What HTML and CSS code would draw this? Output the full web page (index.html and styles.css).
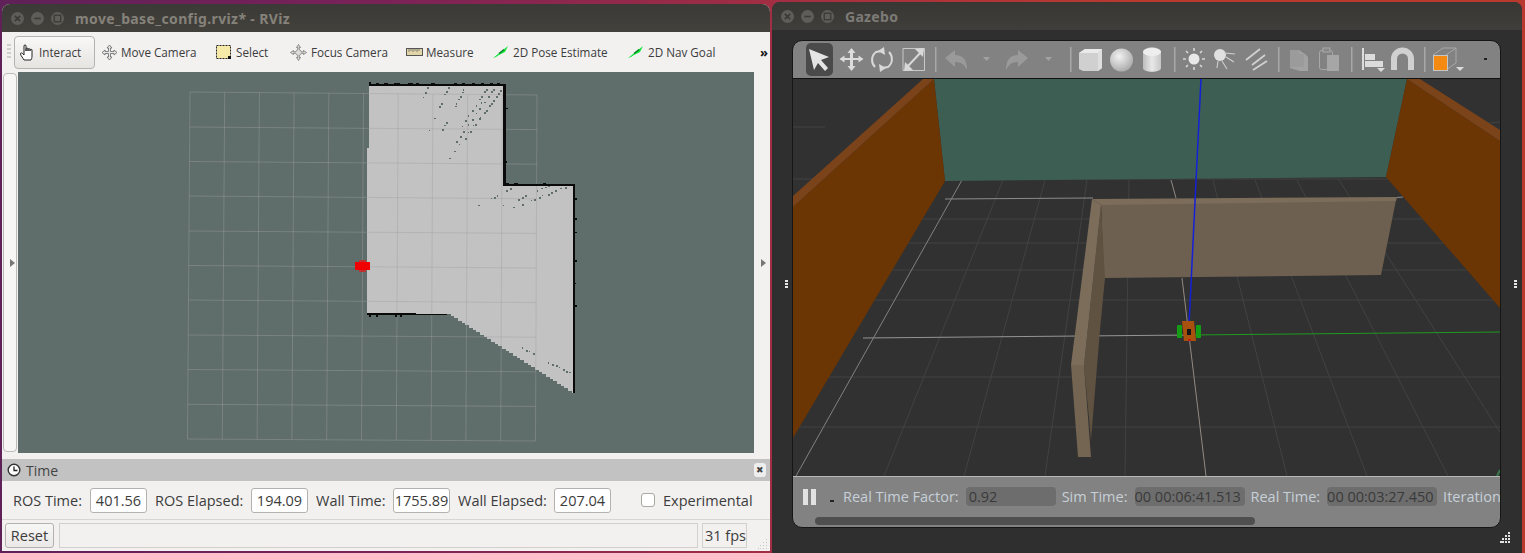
FILE: index.html
```html
<!DOCTYPE html>
<html lang="en">
<head>
<meta charset="utf-8">
<title>RViz and Gazebo</title>
<link rel="stylesheet" href="styles.css">
</head>
<body>
<svg class="defs" width="0" height="0" aria-hidden="true">
  <defs>
    <radialGradient id="sphere" cx="40%" cy="35%" r="70%"><stop offset="0" stop-color="#f2f2f2"/><stop offset="1" stop-color="#a8a8a8"/></radialGradient>
    <linearGradient id="cyl" x1="0" x2="1" y1="0" y2="0"><stop offset="0" stop-color="#bdbdbd"/><stop offset=".5" stop-color="#e8e8e8"/><stop offset="1" stop-color="#c6c6c6"/></linearGradient>
  </defs>
</svg>

<section class="window rviz">
  <header class="titlebar">
    <span class="ctl"><svg viewBox="0 0 12 12"><path d="M3.5 3.5l5 5M8.500 3.500l-5 5" stroke="#3c3a36" stroke-width="1.600"/></svg></span>
    <span class="ctl"><svg viewBox="0 0 12 12"><path d="M3 6h6" stroke="#3c3a36" stroke-width="1.600"/></svg></span>
    <span class="ctl"><svg viewBox="0 0 12 12"><rect x="3" y="3" width="6" height="6" fill="none" stroke="#3c3a36" stroke-width="1.200"/></svg></span>
    <h1 class="title title-rviz">move_base_config.rviz* - RViz</h1>
  </header>
  <nav class="rviz-tools">
    <span class="grip"></span>
    <button class="tool active t-interact">
      <svg class="ico" width="18" height="18" viewBox="0 0 18 18"><path d="M5 17c-1-2-3-4-3.500-6-.2-1 1-1.500 1.700-.8L5 12V3c0-1.500 2-1.500 2 0v5-2c0-1.300 2-1.300 2 0v2-1.500c0-1.200 2-1.200 2 0V8V7c0-1 2-1 2 0v6c0 2-.5 3-1 4z" fill="#fff" stroke="#222" stroke-width="1"/></svg>
      <span>Interact</span></button>
    <div class="tool t-move">
      <svg class="ico" width="17" height="17" viewBox="0 0 17 17"><path d="M8.500 1l2.500 3H9.500v3.500H13V6l3 2.500-3 2.500V9.500H9.500V13H11l-2.500 3L6 13h1.500V9.500H4V11L1 8.500 4 6v1.500h3.500V4H6z" fill="#e6e6e6" stroke="#666" stroke-width=".8"/></svg>
      <span>Move Camera</span></div>
    <div class="tool t-select">
      <svg class="ico" width="16" height="15" viewBox="0 0 16 15"><rect x=".5" y=".5" width="14" height="13" fill="#f7eaa8" stroke="#222" stroke-dasharray="2 1"/><rect x="12" y="11" width="3" height="3" fill="#111"/></svg>
      <span>Select</span></div>
    <div class="tool t-focus">
      <svg class="ico" width="17" height="17" viewBox="0 0 17 17"><path d="M8.500 .5l2 3h-1.200v2.300a3 3 0 0 1 2 2h2.200V6.500l3 2-3 2V9.300h-2.200a3 3 0 0 1-2 2v2.200h1.200l-2 3-2-3h1.200v-2.200a3 3 0 0 1-2-2H3.500v1.200l-3-2 3-2v1.300h2.200a3 3 0 0 1 2-2V3.500H6.500z" fill="#ddd" stroke="#666" stroke-width=".7"/></svg>
      <span>Focus Camera</span></div>
    <div class="tool t-measure">
      <svg class="ico" width="17" height="8" viewBox="0 0 17 8"><rect x=".5" y=".5" width="16" height="7" fill="#e2d6a8" stroke="#555"/><path d="M3 1v3M5 1v2M7 1v3M9 1v2M11 1v3M13 1v2" stroke="#666" stroke-width=".8"/></svg>
      <span>Measure</span></div>
    <div class="tool t-pose">
      <svg class="ico" width="16" height="14" viewBox="0 0 16 14"><path d="M0 13L15 1l-3 6-6 3-3 2z" fill="#14e53a"/><path d="M6 8.500l5-4" stroke="#0a7a24" stroke-width="1.400"/></svg>
      <span>2D Pose Estimate</span></div>
    <div class="tool t-nav">
      <svg class="ico" width="16" height="14" viewBox="0 0 16 14"><path d="M0 13L15 1l-3 6-6 3-3 2z" fill="#14e53a"/><path d="M6 8.500l5-4" stroke="#0a7a24" stroke-width="1.400"/></svg>
      <span>2D Nav Goal</span></div>
    <div class="more">»</div>
  </nav>
  <div class="rviz-main">
    <div class="side side-left"><span class="splitter"></span><span class="arrow arrow-l"></span></div>
    <svg class="map" viewBox="18 72 736 381" width="736" height="381">
      <rect x="18" y="72" width="736" height="381" fill="#5f6d6b"/>
      <path shape-rendering="crispEdges" fill="#c2c2c2" d="M369 84H505V184H575V393H572V391H568V388H564V386H561V384H557V381H553V379H550V377H546V374H542V372H539V370H535V367H531V365H528V363H524V360H520V358H517V356H513V353H509V351H506V349H502V346H498V344H495V342H491V339H487V337H484V335H480V332H476V330H473V328H469V325H465V323H462V321H458V318H454V316H451V314H367V148H369z"/>
      <g stroke="#a0a0a4" stroke-opacity=".42" stroke-width="1" fill="none">
        <path d="M190 92L187.500 439M224.700 92.300L222.300 439.200M259.400 92.600L257.100 439.400M294.100 92.900L291.900 439.600M328.800 93.200L326.700 439.800M363.500 93.500L361.500 440M398.200 93.800L396.300 440.200M432.900 94.100L431.100 440.400M467.600 94.400L465.900 440.600M502.300 94.700L500.700 440.800M537 95L535.500 441"/>
        <path d="M190 92L537 95M189.700 127L537 129.600M189.400 161.500L536.800 164.200M189.200 196L536.600 198.800M188.900 231L536.400 233.400M188.700 265.500L536.200 268M188.400 300L536 302.600M188.100 335L535.900 337.200M187.900 369.500L535.700 371.800M187.700 404.300L535.600 406.400M187.500 439L535.500 441"/>
      </g>
      <path shape-rendering="crispEdges" fill="#5f6d6b" d="M427 87h2v2h-2zM425 92h2v2h-2zM423 97h1v1h-1zM448 87h2v2h-2zM446 91h2v2h-2zM444 94h2v1h-2zM441 103h2v2h-2zM439 106h2v2h-2zM434 118h2v1h-2zM446 122h2v2h-2zM444 125h2v1h-2zM442 129h2v2h-2zM429 130h1v1h-1zM463 89h1v2h-1zM462 92h2v1h-2zM460 96h2v2h-2zM458 99h2v1h-2zM456 103h1v2h-1zM455 106h2v1h-2zM468 115h1v2h-1zM465 120h2v2h-2zM462 126h1v1h-1zM463 131h2v2h-2zM460 136h2v2h-2zM456 141h2v2h-2zM459 144h1v1h-1zM454 151h2v1h-2zM449 158h2v1h-2zM465 138h2v2h-2zM468 132h1v1h-1zM470 131h2v2h-2zM473 125h1v1h-1zM475 124h2v2h-2zM468 124h1v2h-1zM472 119h2v2h-2zM472 110h2v2h-2zM476 105h1v2h-1zM476 113h1v1h-1zM479 118h2v2h-2zM480 117h1v1h-1zM479 108h2v2h-2zM481 102h1v2h-1zM479 99h2v1h-2zM481 96h2v2h-2zM484 91h2v2h-2zM486 89h2v2h-2zM491 91h2v2h-2zM493 89h2v2h-2zM488 96h2v2h-2zM484 102h2v1h-2zM489 105h2v2h-2zM491 103h2v2h-2zM493 100h2v2h-2zM496 96h2v2h-2zM498 93h2v2h-2zM500 90h2v2h-2zM484 112h2v2h-2zM486 110h2v2h-2zM506 190h2v2h-2zM510 188h2v2h-2zM537 190h1v2h-1zM541 188h2v1h-2zM545 187h2v1h-2zM548 185h2v2h-2zM518 199h2v2h-2zM522 197h2v2h-2zM525 195h2v2h-2zM494 197h2v2h-2zM497 195h1v2h-1zM491 198h1v1h-1zM522 204h2v2h-2zM513 207h2v1h-2zM503 205h1v1h-1zM478 205h2v1h-2zM531 200h1v1h-1zM534 199h2v2h-2zM539 197h2v2h-2zM542 195h1v1h-1zM548 194h2v2h-2zM551 192h2v2h-2zM555 190h2v2h-2zM560 188h2v1h-2zM565 187h2v2h-2zM522 347h1v2h-1zM526 350h2v2h-2zM529 351h1v1h-1zM533 353h2v2h-2zM548 362h1v2h-1zM552 364h2v2h-2zM556 365h2v2h-2zM559 367h1v1h-1zM563 369h2v2h-2zM566 371h2v2h-2zM569 372h2v1h-2z"/>
      <path shape-rendering="crispEdges" fill="#0a0a0a" d="M369 82h2v3h-2zM369 84h136v2H369zM376 83h3v1h-3zM384 83h4v1h-4zM394 83h6v1h-6zM408 83h5v1h-5zM416 83h3v1h-3zM431 83h4v1h-4zM454 83h3v1h-3zM462 83h3v1h-3zM472 83h3v1h-3zM481 83h3v1h-3zM490 83h3v1h-3zM497 83h3v1h-3zM503 84h3v102h-3zM506 108h2v1h-2zM505 161h2v2h-2zM504 184h71v2h-71zM506 183h3v1h-3zM514 183h4v1h-4zM540 184h3v-1h3v1zM573 184h2v209h-2zM575 198h2v2h-2zM575 218h2v2h-2zM575 232h2v1h-2zM575 260h2v2h-2zM573 273h2v1h-2zM575 283h1v1h-1zM575 305h2v2h-2zM367 313h49v2h-49zM416 314h31v1h-31zM369 315h2v2h-2zM376 315h2v2h-2zM395 315h2v2h-2zM400 315h2v2h-2z"/>
      <path shape-rendering="crispEdges" fill="#f20000" d="M355 262h15v8h-15z"/>
      <path shape-rendering="crispEdges" fill="#c03030" d="M359 260h7v2h-7zM359 270h7v2h-7z"/>
    </svg>
    <div class="side side-right"><span class="arrow arrow-r"></span></div>
  </div>
  <div class="panel-head">
    <svg class="clock" width="14" height="14" viewBox="0 0 14 14"><circle cx="7" cy="7" r="5.800" fill="#fff" stroke="#333" stroke-width="1.400"/><path d="M7 3.500V7.500H10.500" fill="none" stroke="#222" stroke-width="1.300"/></svg>
    <span class="panel-title">Time</span>
    <span class="panel-close">✖</span>
  </div>
  <div class="time-row">
    <span class="lab lab1">ROS Time:</span><output class="val">401.56</output>
    <span class="lab lab2">ROS Elapsed:</span><output class="val">194.09</output>
    <span class="lab lab3">Wall Time:</span><output class="val">1755.89</output>
    <span class="lab lab4">Wall Elapsed:</span><output class="val">207.04</output>
    <span class="check"></span><span class="lab lab5">Experimental</span>
  </div>
  <div class="status-row">
    <button class="reset">Reset</button>
    <span class="status-msg"></span>
    <span class="fps">31 fps</span>
    <svg class="sizegrip" width="10" height="10" viewBox="0 0 10 10"><path shape-rendering="crispEdges" fill="#c8c6c3" d="M8 0h1v1H8zM5 3h1v1H5zM8 3h1v1H8zM2 6h1v1H2zM5 6h1v1H5zM8 6h1v1H8zM0 9h1v1H0zM2 9h1v1H2zM5 9h1v1H5zM8 9h1v1H8z"/></svg>
  </div>
</section>

<section class="window gazebo">
  <header class="titlebar">
    <span class="ctl"><svg viewBox="0 0 12 12"><path d="M3.5 3.5l5 5M8.500 3.500l-5 5" stroke="#3c3a36" stroke-width="1.600"/></svg></span>
    <span class="ctl"><svg viewBox="0 0 12 12"><path d="M3 6h6" stroke="#3c3a36" stroke-width="1.600"/></svg></span>
    <span class="ctl"><svg viewBox="0 0 12 12"><rect x="3" y="3" width="6" height="6" fill="none" stroke="#3c3a36" stroke-width="1.200"/></svg></span>
    <h1 class="title title-gz">Gazebo</h1>
  </header>
  <div class="gz-body">
    <div class="dock-col"><span class="dots"></span></div>
    <div class="gz-panel">
      <nav class="gz-tools">
        <svg class="gz-toolsvg" viewBox="792 41 709 37" width="709" height="37">
          <rect x="806" y="43" width="27" height="33" rx="5" fill="#4a4a4a"/>
          <path d="M809 49l20 8-8 3 7 8-3 3-7-8-4 7z" fill="#e4e4e4"/>
          <path d="M851.500 48l4 5H853v5h5.500v-2.500l5 3.500-5 3.500V60H853v6h2.500l-4 5-4-5h2.500v-6h-5.500v2.500l-5-3.500 5-3.500V58h5.500v-5h-2.500z" fill="#dcdcdc"/>
          <g fill="none" stroke="#d8d8d8" stroke-width="2">
            <path d="M875 67a10 10 0 0 1 1-15l6-1"/>
            <path d="M889 52a10 10 0 0 1-1 15l-6 1"/>
            <path d="M903 48.500h21.500v22h-21.500z" stroke-width="1" stroke="#c8c8c8"/>
            <path d="M908 66l15-16" />
          </g>
          <path d="M884 47l-6 4 7 4zM880 72l6-4-7-4zM924 48l-9 1 8 8zM904 71l9-1-8-8z" fill="#d8d8d8"/>
          <g fill="#a8a8a8">
            <rect x="935" y="47" width="1.500" height="25"/><rect x="1070" y="47" width="1.500" height="25"/><rect x="1174" y="47" width="1.500" height="25"/><rect x="1278" y="47" width="1.500" height="25"/><rect x="1351" y="47" width="1.500" height="25"/><rect x="1424" y="47" width="1.500" height="25"/>
          </g>
          <path d="M945 58l10-8v5c8 0 12 5 12 15-3-6-6-8-12-8v5z" fill="#9a9a9a"/>
          <path d="M1028 58l-10-8v5c-8 0-12 5-12 15 3-6 6-8 12-8v5z" fill="#9a9a9a"/>
          <path d="M983 57h7l-3.500 4zM1045 57h7l-3.500 4z" fill="#a2a2a2"/>
          <path d="M1079 53l6-4h17v19l-4 3h-15l-4-2z" fill="#d0d0d0"/><path d="M1085 49h17l-4 4h-19z" fill="#eaeaea"/><path d="M1098 53l4-4v19l-4 3z" fill="#dedede"/>
          <circle cx="1121.500" cy="60" r="11.500" fill="url(#sphere)"/>
          <path d="M1143 52c0-6 18-6 18 0v16c0 5-18 5-18 0z" fill="url(#cyl)"/><ellipse cx="1152" cy="52" rx="9" ry="4" fill="#eee"/>
          <circle cx="1194" cy="59" r="5.500" fill="#e8e8e8"/>
          <path d="M1194 48v3M1194 67v3M1183 59h3M1202 59h3M1186 51l2 2M1200 65l2 2M1186 67l2-2M1200 53l2-2" stroke="#d8d8d8" stroke-width="1.600"/>
          <circle cx="1220" cy="55" r="6" fill="#e0e0e0"/>
          <path d="M1224 53l11 1M1226 57l8 5M1222 61l5 8M1218 61l-1 7" stroke="#cfcfcf" stroke-width="1.100"/>
          <path d="M1246 60l14-11M1252 65l13-10M1253 70l14-9" stroke="#d0d0d0" stroke-width="1.800"/>
          <path d="M1290 50h9l6 4 3 3v14h-8l-10-3z" fill="#a2a2a2"/><path d="M1290 50h9v4h5v13h-14z" fill="#9b9b9b"/>
          <rect x="1319.500" y="50.500" width="13" height="19" rx="2" fill="none" stroke="#a8a8a8"/><path d="M1327 55h12v16h-12z" fill="#a6a6a6"/><rect x="1323" y="48" width="7" height="4" fill="#888" stroke="#a8a8a8"/>
          <path d="M1363 48v22" stroke="#dcdcdc" stroke-width="2"/><path d="M1365 54h10v6h-10zM1365 61h18v6h-18z" fill="#dcdcdc"/><path d="M1377 68h8l-4 4z" fill="#dcdcdc"/>
          <path d="M1397 70v-11a5.500 5.500 0 0 1 11 0v11h6V59a11.500 11.500 0 0 0-23 0v11z" fill="#d0d0d0"/>
          <g fill="none" stroke="#a8a8a8"><path d="M1433 55l10-7h13v15l-10 7"/><path d="M1456 48l-10 7"/></g>
          <rect x="1433.500" y="55.500" width="14" height="15" fill="#f58a12" stroke="#c6c6c6"/>
          <path d="M1456 67h8l-4 4z" fill="#dcdcdc"/>
          <rect x="1484" y="58" width="3" height="2" fill="#222"/>
        </svg>
      </nav>
      <svg class="scene" viewBox="793 79 707 397" width="707" height="397">
        <rect x="793" y="79" width="707" height="397" fill="#313131"/>
        <g stroke="#424242" stroke-width="1" fill="none">
          <path d="M793 179H1500M793 219H1500M793 243H1500M793 270H1500M793 300H1500M793 377H1500M793 427H1500"/>
          <path d="M1003 180L884 476M1045 180L964 476M1087 180L1045 476M1129 180L1125 476M1213 180L1287 476M1255 180L1367 476M1297 180L1448 476M1339 180L1528 476M919 180L722 476"/>
          <path d="M793 127H825M1478 124L1500 122"/>
        </g>
        <path d="M945 199L1093 198M1397 197.500L1403 197" stroke="#8c8c8c" stroke-width="1"/>
        <path d="M863 338L1190 335" stroke="#959595" stroke-width="1"/>
        <path d="M1190 335L1500 332" stroke="#1f9a1f" stroke-width="1"/>
        <path d="M962 180L796 476" stroke="#828282" stroke-width="1"/>
        <path d="M1171 180L1176 198M1182 278L1206 476" stroke="#928a84" stroke-width="1"/>
        <path d="M1497 476L1500 470" stroke="#3c7a4c" stroke-width="2"/>
        <polygon points="934,79 1407,79 1386,177 945,181" fill="#3d5f53"/>
        <polygon points="934,79 945,181 793,438 793,207" fill="#6c3504"/>
        <polygon points="923,79 934,79 793,207 793,196" fill="#7a431a"/>
        <polygon points="1407,79 1386,177 1500,308 1500,141" fill="#6c3504"/>
        <polygon points="1407,79 1420,79 1500,130 1500,141" fill="#7a431a"/>
        <polygon points="1101,203 1396,200 1381,275 1104,278" fill="#6e6050"/>
        <polygon points="1092,199 1397,197 1396,201 1101,205" fill="#7b6d5a"/>
        <polygon points="1101,205 1105,278 1100,330 1091,440 1084,365" fill="#5f5241"/>
        <polygon points="1092,199 1101,205 1084,365 1071,365" fill="#7b6d5a"/>
        <polygon points="1071,365 1084,365 1091,457 1078,457" fill="#736552"/>
        <path d="M1201 79L1189 325" stroke="#1420d8" stroke-width="1.500"/>
        <rect x="1177" y="325" width="5" height="13" rx="1" fill="#149c14"/>
        <rect x="1196" y="325" width="5" height="13" rx="1" fill="#149c14"/>
        <polygon points="1182,321 1194,321 1196,341 1184,341" fill="#a8500e"/>
        <rect x="1187" y="329" width="4" height="6" fill="#151515"/>
        <rect x="1188" y="339" width="3" height="2" fill="#c81818"/>
      </svg>
      <footer class="gz-foot">
        <div class="gz-status">
          <span class="pause"></span><span class="blip"></span>
          <span class="gl g1">Real Time Factor:</span><output class="gv gv1">0.92</output>
          <span class="gl">Sim Time:</span><output class="gv gv2">00 00:06:41.513</output>
          <span class="gl">Real Time:</span><output class="gv gv3">00 00:03:27.450</output>
          <span class="gl">Iterations:</span>
        </div>
        <div class="gz-scroll"><span class="gz-thumb"></span></div>
      </footer>
    </div>
    <div class="dock-col"><span class="dots"></span></div>
  </div>
  <svg class="gz-grip" width="11" height="11" viewBox="0 0 11 11"><path shape-rendering="crispEdges" fill="#e4e4e4" d="M8 0h2v2H8zM5 3h2v2H5zM8 3h2v2H8zM2 6h2v2H2zM5 6h2v2H5zM8 6h2v2H8zM0 9h2v2H0zM2 9h2v2H2zM5 9h2v2H5zM8 9h2v2H8z"/></svg>
</section>
</body>
</html>
```

FILE: styles.css
```css
* { box-sizing: border-box; }
html, body { margin: 0; padding: 0; }
body {
  width: 1525px; height: 553px; overflow: hidden; position: relative;
  background: linear-gradient(90deg, #5e2158 0%, #7a2258 25%, #a8303f 55%, #b83a2e 75%, #b83a2e 100%);
  font-family: "Open Sans", "Noto Sans", sans-serif;
}
.defs { position: absolute; }
.window { position: absolute; display: flex; flex-direction: column; overflow: hidden; border-radius: 8px 8px 0 0; }
.rviz { left: 2px; top: 4px; width: 768px; height: 547px; background: #f2f1f0; }
.gazebo { left: 772px; top: 2px; width: 750px; height: 551px; background: #2f2f2f; }

.titlebar { height: 28px; flex: none; display: flex; align-items: center; padding-left: 9px; gap: 7px; background: linear-gradient(#3b3a36, #43413c); }
.gazebo .titlebar { background: linear-gradient(#383734, #403e3a); }
.ctl { width: 13px; height: 13px; border-radius: 50%; background: #5f5d58; flex: none; display: flex; }
.ctl svg { width: 13px; height: 13px; }
.title { margin: 0; font: bold 14px "Noto Sans", sans-serif; color: #85827b; white-space: nowrap; }
.title-rviz { margin-left: 4px; letter-spacing: .38px; }
.title-gz { margin-left: 4px; color: #7d7b76; letter-spacing: .3px; }

.rviz-tools { height: 40px; flex: none; display: grid; align-items: center; position: relative;
  grid-template-columns: 12px 81px 121px 74px 116px 87px 135px 130px 1fr; }
.grip { display: block; width: 4px; height: 16px; margin-left: 5px; background: repeating-linear-gradient(#d0cfcd 0 2px, transparent 2px 4px); }
.tool { display: flex; align-items: center; gap: 4px; font-size: 11.7px; color: #3c3c3c; white-space: nowrap; height: 33px; background: none; border: 0; padding: 0; font-family: inherit; }
.tool.active { background: linear-gradient(#f8f8f7, #e6e4e1); border: 1px solid #b5b3af; border-radius: 4px; padding-left: 4px; gap: 2px; }
.t-move { padding-left: 6px; gap: 3px; }
.t-measure { gap: 3px; }
.ico { flex: none; }
.more { font-size: 13px; font-weight: bold; color: #111; text-align: right; padding-right: 2px; line-height: 16px; }

.rviz-main { height: 381px; flex: none; display: flex; }
.side { width: 16px; flex: none; position: relative; display: flex; }
.splitter { margin: 1px 0 1px 1px; width: 14px; border: 1px solid #bdbbb8; border-radius: 4px; background: #f7f6f5; }
.map { display: block; flex: none; }
.arrow { position: absolute; top: 187px; width: 0; height: 0; border-top: 4px solid transparent; border-bottom: 4px solid transparent; }
.arrow-l { left: 8px; border-left: 5px solid #777; }
.arrow-r { left: 7px; border-left: 5px solid #777; }

.panel-head { margin-top: 6px; height: 22px; flex: none; background: #c2c2c2; display: flex; align-items: center; padding-left: 5px; gap: 5px; position: relative; }
.panel-title { font-size: 14px; color: #444; }
.panel-close { margin-left: auto; margin-right: 4px; width: 12px; height: 14px; border-radius: 3px; background: #eee; font-size: 9px; line-height: 14px; text-align: center; color: #444; }

.time-row { height: 39px; flex: none; display: flex; align-items: center; padding-left: 11px; font-size: 14.5px; color: #3c3c3c; white-space: nowrap; border-bottom: 1px solid #d8d6d3; }
.lab { display: block; }
.lab1 { width: 77px; }
.lab2 { width: 96px; }
.lab3 { width: 77px; }
.lab4 { width: 96px; }
.val { width: 57px; height: 25px; border: 1px solid #b4b2ae; border-radius: 3px; background: #fff; line-height: 23px; text-align: center; margin-right: 8px; font-size: 14.5px; }
.check { width: 14px; height: 14px; border: 1px solid #a9a7a3; border-radius: 3px; background: #fff; margin-left: 22px; margin-right: 8px; flex: none; }

.status-row { margin-top: 2px; height: 28px; flex: none; display: flex; align-items: stretch; font-size: 14.5px; color: #3c3c3c; padding: 1px 0 2px 3px; position: relative; }
.reset { width: 49px; border: 1px solid #b4b2ae; border-radius: 3px; background: linear-gradient(#f7f7f6, #ebe9e7); font: 14.5px "Open Sans", sans-serif; color: #3c3c3c; padding: 0; }
.status-msg { width: 639px; margin-left: 5px; border: 1px solid #d2d0cd; }
.fps { width: 45px; margin-left: 4px; border: 1px solid #d2d0cd; line-height: 24px; padding-left: 2px; }
.sizegrip { position: absolute; right: 2px; bottom: 1px; }

.gz-body { flex: 1; display: flex; padding-top: 10px; padding-bottom: 25px; }
.dock-col { width: 20px; flex: none; display: flex; align-items: center; justify-content: center; }
.dots { width: 3px; height: 8px; margin-left: 8px; background: repeating-linear-gradient(#e6e6e6 0 2px, transparent 2px 3px); }
.gz-panel { width: 709px; flex: none; display: flex; flex-direction: column; background: #828282; border: 1px solid #161616; border-radius: 10px; overflow: hidden; }
.gz-tools { height: 37px; flex: none; }
.gz-toolsvg { display: block; margin-left: -1px; }
.scene { display: block; flex: none; border-top: 1px solid #111; box-sizing: content-box; border-bottom: 1px solid #b8b8b8; }
.gz-foot { flex: 1; position: relative; min-height: 0; }
.gz-status { height: 39px; display: flex; align-items: center; padding-left: 10px; color: #c7d0d8; font-size: 14.5px; white-space: nowrap; overflow: hidden; }
.pause { width: 13px; height: 16px; flex: none; border-left: 5px solid #e2e2e2; border-right: 5px solid #e2e2e2; margin-right: 14px; }
.blip { width: 4px; height: 2px; margin: 8px 9px 0 0; background: #222; flex: none; }
.gl { margin-right: 7px; flex: none; }
.gv { flex: none; height: 19px; line-height: 19px; border-radius: 4px; background: #6d6d6d; color: #3a3a3a; padding-left: 3px; margin-right: 6px; }
.gv1 { width: 90px; }
.gv2 { width: 110px; padding-left: 0; }
.gv3 { width: 110px; padding-left: 0; }
.gz-scroll { position: absolute; left: 22px; top: 40px; width: 440px; height: 8px; }
.gz-thumb { display: block; width: 100%; height: 100%; border-radius: 4px; background: #4f4f4f; }
.gz-grip { position: absolute; right: 11px; bottom: 10px; }
```
